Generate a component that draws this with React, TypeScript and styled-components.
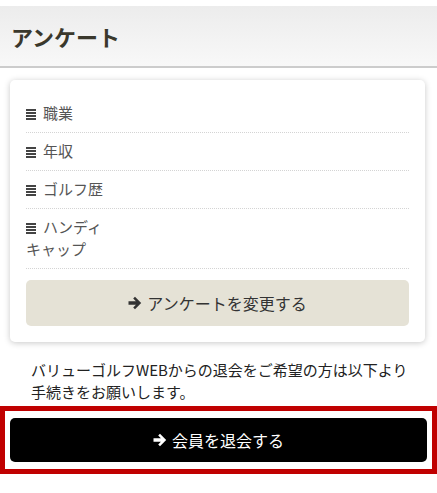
import React from 'react';
import styled, { createGlobalStyle } from 'styled-components';

const GlobalStyle = createGlobalStyle`
  * {
    box-sizing: border-box;
  }
  body {
    margin: 0;
    background: #ffffff;
    font-family: 'Noto Sans CJK JP', 'Noto Sans', sans-serif;
    color: #333333;
  }
`;

const Page = styled.div`
  padding-top: 6px;
  width: 437px;
`;

const Header = styled.h1`
  margin: 0;
  height: 62px;
  padding: 0 11px;
  display: flex;
  align-items: center;
  font-size: 22px;
  font-weight: 700;
  color: #3a382c;
  background: linear-gradient(to bottom, #ececec, #f8f8f8);
  border-bottom: 2px solid #cccccc;
`;

const Card = styled.div`
  margin: 12px 12px 0 10px;
  padding: 15px 16px 16px;
  background: #ffffff;
  border-radius: 5px;
  box-shadow: 0 1px 6px rgba(0, 0, 0, 0.22);
`;

const List = styled.dl`
  margin: 0;
`;

const Row = styled.div`
  display: flex;
  padding: 7px 0 8px;
  border-bottom: 1px dotted #d4d4d4;
`;

const Label = styled.dt`
  width: 88px;
  font-size: 15px;
  line-height: 22px;
  color: #555555;
`;

const Value = styled.dd`
  margin: 0;
  flex: 1;
`;

const BarsIcon = styled.svg`
  width: 10px;
  height: 11px;
  margin-right: 7px;
  vertical-align: -1px;
`;

const Button = styled.button<{ $dark?: boolean }>`
  display: flex;
  align-items: center;
  justify-content: center;
  gap: 5px;
  width: 100%;
  border: none;
  border-radius: 5px;
  font-family: inherit;
  font-size: 16px;
  height: ${(p) => (p.$dark ? '44px' : '46px')};
  background: ${(p) => (p.$dark ? '#000000' : '#e5e2d6')};
  color: ${(p) => (p.$dark ? '#ffffff' : '#333333')};
  cursor: pointer;
`;

const ChangeButton = styled(Button)`
  margin-top: 11px;
`;

const Notice = styled.p`
  margin: 17px 0 3px;
  padding: 0 20px 0 31px;
  font-size: 15px;
  line-height: 22px;
  color: #222222;
`;

const Highlight = styled.div`
  border: 5px solid #c00000;
  padding: 7px 5px;
`;

const Arrow = ({ color }: { color: string }) => (
  <svg width="14" height="14" viewBox="0 0 14 14" aria-hidden="true">
    <path
      d="M0.5 5.3h7.4L5.2 2.6 7 0.8 13.2 7 7 13.2 5.2 11.4 7.9 8.7H0.5z"
      fill={color}
    />
  </svg>
);

const Bars = () => (
  <BarsIcon viewBox="0 0 10 11" aria-hidden="true">
    <rect x="0" y="0" width="10" height="2" fill="#444" />
    <rect x="0" y="3" width="10" height="2" fill="#444" />
    <rect x="0" y="6" width="10" height="2" fill="#444" />
    <rect x="0" y="9" width="10" height="2" fill="#444" />
  </BarsIcon>
);

const items = ['職業', '年収', 'ゴルフ歴', 'ハンディキャップ'];

const App = () => {
  return (
    <Page>
      <GlobalStyle />
      <Header>アンケート</Header>
      <Card>
        <List>
          {items.map((item) => (
            <Row key={item}>
              <Label>
                <Bars />
                {item}
              </Label>
              <Value />
            </Row>
          ))}
        </List>
        <ChangeButton>
          <Arrow color="#333333" />
          アンケートを変更する
        </ChangeButton>
      </Card>
      <Notice>
        バリューゴルフWEBからの退会をご希望の方は以下より手続きをお願いします。
      </Notice>
      <Highlight>
        <Button $dark>
          <Arrow color="#ffffff" />
          会員を退会する
        </Button>
      </Highlight>
    </Page>
  );
};

export default App;
